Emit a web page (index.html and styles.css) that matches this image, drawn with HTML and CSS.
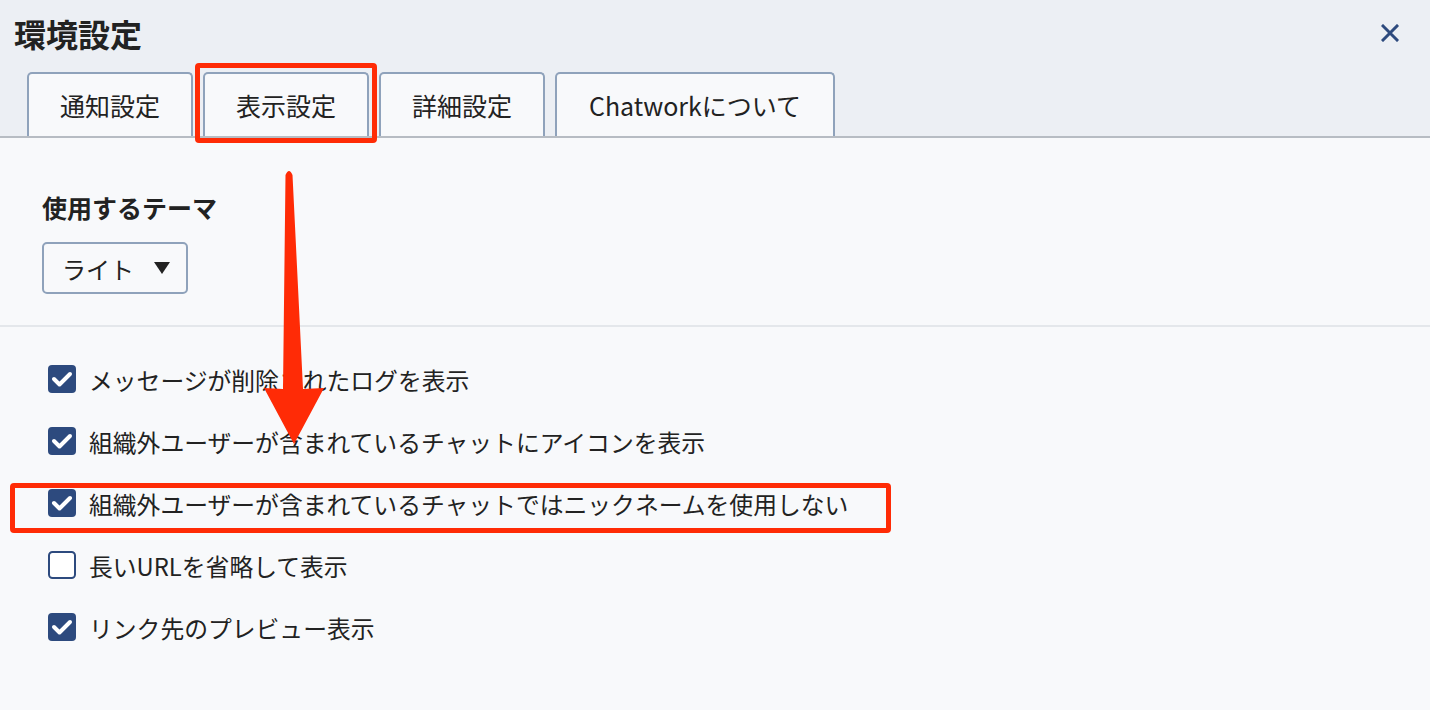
FILE: index.html
```html
<!DOCTYPE html>
<html lang="ja">
<head>
    <meta charset="UTF-8">
    <meta name="viewport" content="width=device-width, initial-scale=1.0">
    <title>環境設定</title>
    <link rel="stylesheet" href="styles.css">
</head>
<body>
    <div class="dialog">
        <div class="header">
            <div class="title-row">
                <h1>環境設定</h1>
                <button class="close" aria-label="閉じる">
                    <svg width="18" height="18" viewBox="0 0 18 18"><path d="M2 2 L16 16 M16 2 L2 16" stroke="#2d4a7e" stroke-width="3" stroke-linecap="square"/></svg>
                </button>
            </div>
            <div class="tabs">
                <div class="tab">通知設定</div>
                <div class="tab active">表示設定</div>
                <div class="tab">詳細設定</div>
                <div class="tab tab-wide">Chatworkについて</div>
            </div>
        </div>

        <div class="content">
            <div class="theme-section">
                <h2>使用するテーマ</h2>
                <div class="select">
                    <span>ライト</span>
                    <span class="caret"></span>
                </div>
            </div>

            <ul class="options">
                <li><svg class="check" viewBox="0 0 28 28"><rect width="28" height="28" rx="4" fill="#2d4a7e"/><path d="M6 14 L11.5 19.5 L22 9" fill="none" stroke="#fff" stroke-width="4" stroke-linecap="round" stroke-linejoin="round"/></svg>メッセージが削除されたログを表示</li>
                <li><svg class="check" viewBox="0 0 28 28"><rect width="28" height="28" rx="4" fill="#2d4a7e"/><path d="M6 14 L11.5 19.5 L22 9" fill="none" stroke="#fff" stroke-width="4" stroke-linecap="round" stroke-linejoin="round"/></svg>組織外ユーザーが含まれているチャットにアイコンを表示</li>
                <li><svg class="check" viewBox="0 0 28 28"><rect width="28" height="28" rx="4" fill="#2d4a7e"/><path d="M6 14 L11.5 19.5 L22 9" fill="none" stroke="#fff" stroke-width="4" stroke-linecap="round" stroke-linejoin="round"/></svg>組織外ユーザーが含まれているチャットではニックネームを使用しない</li>
                <li><svg class="check" viewBox="0 0 28 28"><rect x="1" y="1" width="26" height="26" rx="3.5" fill="#fff" stroke="#2d4a7e" stroke-width="2"/></svg>長いURLを省略して表示</li>
                <li><svg class="check" viewBox="0 0 28 28"><rect width="28" height="28" rx="4" fill="#2d4a7e"/><path d="M6 14 L11.5 19.5 L22 9" fill="none" stroke="#fff" stroke-width="4" stroke-linecap="round" stroke-linejoin="round"/></svg>リンク先のプレビュー表示</li>
            </ul>
        </div>

        <!-- annotations -->
        <div class="mark mark-tab"></div>
        <div class="mark mark-row"></div>
        <svg class="arrow" width="1430" height="710" viewBox="0 0 1430 710">
            <path d="M285.5 175 Q289 167 292.5 175 L303 389 L324 388 L294 444 L264 388 L283 389 Z" fill="#ff2b06"/>
        </svg>
    </div>
</body>
</html>
```

FILE: styles.css
```css
body {
    margin: 0;
    font-family: "Noto Sans CJK JP", "Noto Sans", sans-serif;
    background-color: #f8f9fb;
    color: #222;
}

.dialog {
    position: relative;
    width: 1430px;
    height: 710px;
    overflow: hidden;
}

.header {
    background-color: #eceff4;
    border-bottom: 2px solid #b7bcc3;
    padding: 13px 0 0 14px;
}

.title-row {
    display: flex;
    justify-content: space-between;
    align-items: center;
    height: 40px;
}

h1 {
    margin: 0;
    font-size: 32px;
    font-weight: 700;
    line-height: 40px;
    color: #222;
}

.close {
    background: none;
    border: none;
    padding: 0;
    width: 18px;
    height: 18px;
    margin-right: 31px;
    display: flex;
    cursor: pointer;
}

.tabs {
    display: flex;
    gap: 10px;
    margin: 19px 0 0 13px;
}

.tab {
    width: 166px;
    height: 64px;
    box-sizing: border-box;
    display: flex;
    align-items: center;
    justify-content: center;
    background-color: #f8f9fb;
    border: 2px solid #8fa2bb;
    border-bottom: none;
    border-radius: 5px 5px 0 0;
    font-size: 25px;
    line-height: 30px;
    color: #222;
}

.tab-wide {
    width: 280px;
}

.theme-section {
    padding: 51px 0 31px 42px;
    border-bottom: 2px solid #e4e7eb;
}

h2 {
    margin: 0 0 17px;
    font-size: 25px;
    font-weight: 700;
    line-height: 36px;
}

.select {
    width: 146px;
    height: 52px;
    box-sizing: border-box;
    border: 2px solid #8fa2bb;
    border-radius: 5px;
    display: flex;
    align-items: center;
    padding-left: 18px;
    gap: 20px;
    font-size: 24px;
    background-color: #f8f9fb;
}

.caret {
    width: 0;
    height: 0;
    border-left: 8px solid transparent;
    border-right: 8px solid transparent;
    border-top: 12px solid #222;
}

.options {
    list-style: none;
    margin: 0;
    padding: 21px 0 0 48px;
}

.options li {
    display: flex;
    align-items: center;
    gap: 13px;
    height: 62px;
    font-size: 23.8px;
}

.check {
    width: 28px;
    height: 28px;
    flex-shrink: 0;
}

.mark {
    position: absolute;
    border: 5px solid #ff2b06;
    border-radius: 4px;
    box-sizing: border-box;
    pointer-events: none;
}

.mark-tab {
    left: 195px;
    top: 63px;
    width: 182px;
    height: 80px;
}

.mark-row {
    left: 10px;
    top: 483px;
    width: 881px;
    height: 50px;
}

.arrow {
    position: absolute;
    left: 0;
    top: 0;
    pointer-events: none;
}
```
